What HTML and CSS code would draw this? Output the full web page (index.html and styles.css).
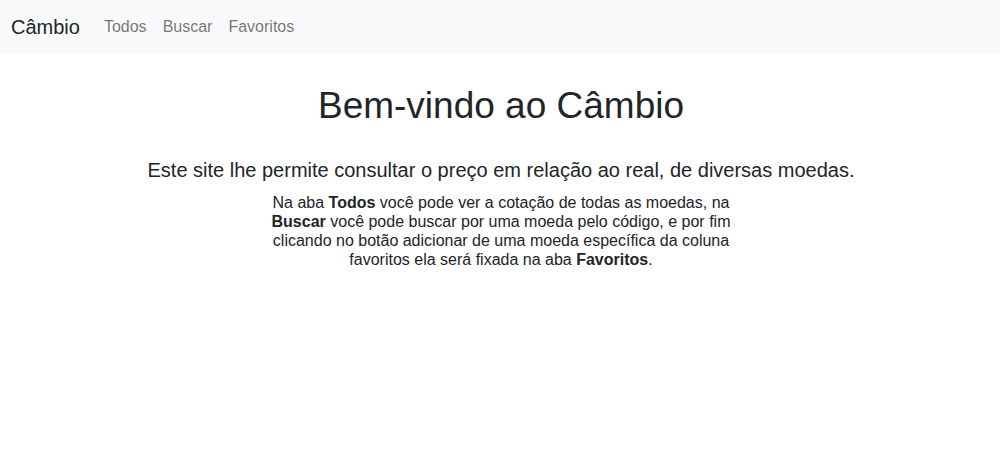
FILE: index.html
```html
<!DOCTYPE html>
<html lang="pt-BR">
<head>
<meta charset="utf-8">
<title>Câmbio</title>
<link rel="stylesheet" href="styles.css">
</head>
<body>
<nav class="navbar">
  <a class="brand" href="#">Câmbio</a>
  <ul class="nav-links">
    <li><a href="#">Todos</a></li>
    <li><a href="#">Buscar</a></li>
    <li><a href="#">Favoritos</a></li>
  </ul>
</nav>
<main class="content">
  <h1 class="title">Bem-vindo ao Câmbio</h1>
  <p class="lead">Este site lhe permite consultar o preço em relação ao real, de diversas moedas.</p>
  <p class="desc">Na aba <b>Todos</b> você pode ver a cotação de todas as moedas, na <b>Buscar</b> você pode buscar por uma moeda pelo código, e por fim clicando no botão adicionar de uma moeda específica da coluna favoritos ela será fixada na aba <b>Favoritos</b>.</p>
</main>
</body>
</html>
```
FILE: styles.css
```css
* { box-sizing: border-box; }
body {
  margin: 0;
  font-family: "Liberation Sans", Arial, sans-serif;
  color: #212529;
  background: #fff;
}
.navbar {
  display: flex;
  align-items: center;
  height: 54px;
  padding: 0 11px;
  background: #f8f9fa;
}
.brand {
  font-size: 20px;
  line-height: 30px;
  color: #212529;
  text-decoration: none;
  margin-right: 16px;
}
.nav-links {
  display: flex;
  list-style: none;
  margin: 0;
  padding: 0;
}
.nav-links a {
  display: block;
  padding: 8px;
  font-size: 16px;
  line-height: 24px;
  color: rgba(0,0,0,.55);
  text-decoration: none;
}
.content {
  display: flex;
  flex-direction: column;
  align-items: center;
  padding-left: 2px;
  text-align: center;
}
.title {
  margin: 30px 0 0;
  font-size: 37px;
  font-weight: 400;
  line-height: 44px;
}
.lead {
  margin: 27px 0 0;
  font-size: 20px;
  line-height: 30px;
}
.desc {
  margin: 8px 0 0;
  width: 480px;
  font-size: 16px;
  line-height: 19px;
}
.desc b { font-weight: 700; }
```
